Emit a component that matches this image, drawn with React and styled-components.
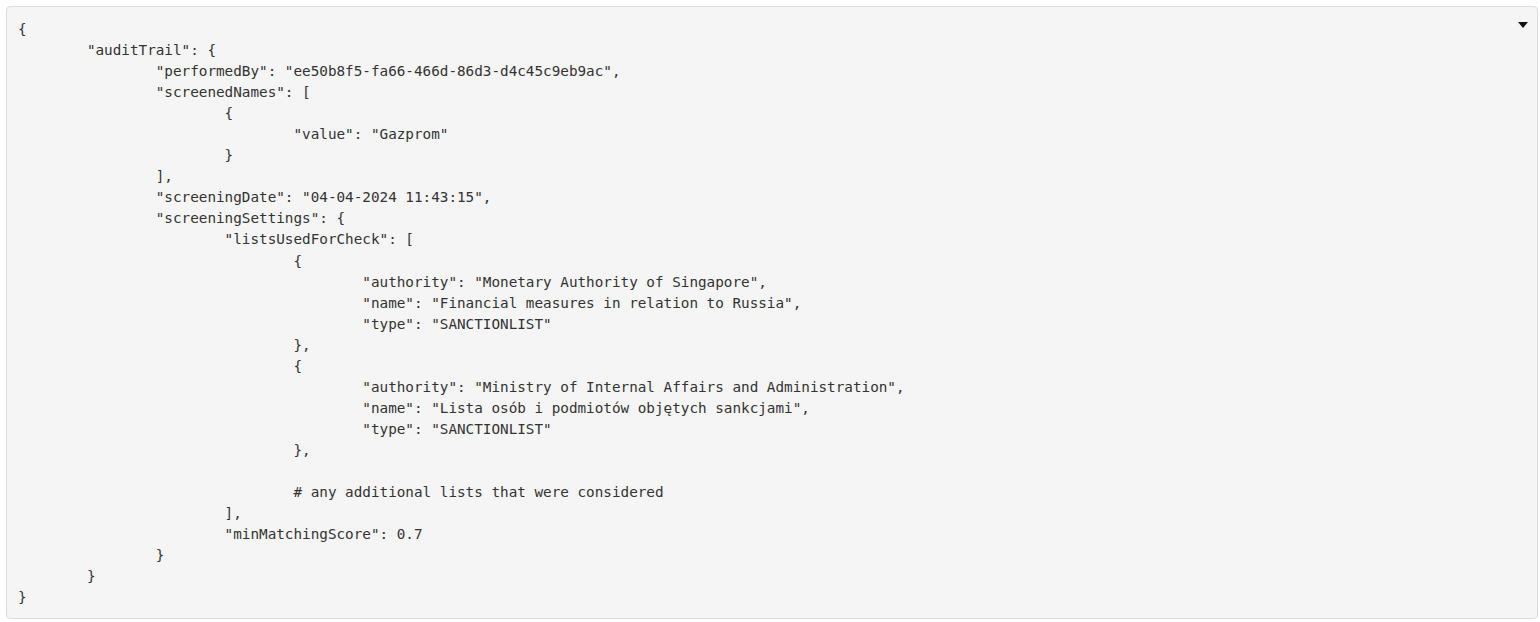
import styled, { createGlobalStyle } from "styled-components";

const GlobalStyle = createGlobalStyle`
  html, body {
    margin: 0;
    padding: 0;
    background: #ffffff;
  }
`;

const lines = [
  [0, "{"],
  [1, '"auditTrail": {'],
  [2, '"performedBy": "ee50b8f5-fa66-466d-86d3-d4c45c9eb9ac",'],
  [2, '"screenedNames": ['],
  [3, "{"],
  [4, '"value": "Gazprom"'],
  [3, "}"],
  [2, "],"],
  [2, '"screeningDate": "04-04-2024 11:43:15",'],
  [2, '"screeningSettings": {'],
  [3, '"listsUsedForCheck": ['],
  [4, "{"],
  [5, '"authority": "Monetary Authority of Singapore",'],
  [5, '"name": "Financial measures in relation to Russia",'],
  [5, '"type": "SANCTIONLIST"'],
  [4, "},"],
  [4, "{"],
  [5, '"authority": "Ministry of Internal Affairs and Administration",'],
  [5, '"name": "Lista osób i podmiotów objętych sankcjami",'],
  [5, '"type": "SANCTIONLIST"'],
  [4, "},"],
  [0, ""],
  [4, "# any additional lists that were considered"],
  [3, "],"],
  [3, '"minMatchingScore": 0.7'],
  [2, "}"],
  [1, "}"],
  [0, "}"],
];

function App() {
  const code = lines.map(([lvl, txt]) => "\t".repeat(lvl) + txt).join("\n");
  return (
    <Page>
      <GlobalStyle />
      <CodeBlock>
        <Toggle aria-label="collapse" />
        <Code>{code}</Code>
      </CodeBlock>
    </Page>
  );
}

export default App;

const Page = styled.div`
  padding: 6px 2px 3px 6px;
`;

const CodeBlock = styled.div`
  position: relative;
  height: 613px;
  box-sizing: border-box;
  background: #f5f5f5;
  border: 1px solid #dcdcdc;
  border-radius: 4px;
  padding: 12px 11px 8px;
`;

const Code = styled.pre`
  margin: 0;
  font-family: "DejaVu Sans Mono", "Liberation Mono", monospace;
  font-size: 14.3px;
  line-height: 21.04px;
  color: #333333;
  tab-size: 8;
  -moz-tab-size: 8;
  white-space: pre;
`;

const Toggle = styled.span`
  position: absolute;
  top: 15px;
  right: 9px;
  width: 0;
  height: 0;
  border-left: 5px solid transparent;
  border-right: 5px solid transparent;
  border-top: 6px solid #111;
`;
